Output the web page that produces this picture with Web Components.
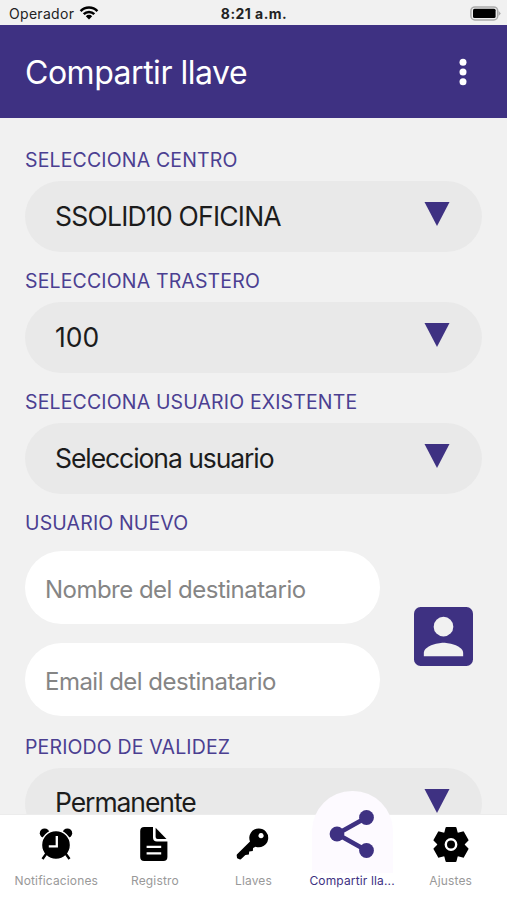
<!DOCTYPE html>
<html lang="es">
<head>
<meta charset="utf-8">
<meta name="viewport" content="width=device-width, initial-scale=1">
<title>Compartir llave</title>
<style>
  html, body {
    margin: 0;
    height: 100%;
  }
  body {
    overflow: hidden;
    background-color: #f1f1f1;
    font-family: Inter, "Liberation Sans", sans-serif;
  }
</style>
</head>
<body>
<share-key-page></share-key-page>

<script>
class StatusBar extends HTMLElement {
  constructor() {
    super();
    this.attachShadow({ mode: "open" });
  }

  connectedCallback() {
    this.shadowRoot.innerHTML = `
      <style>
        :host {
          display: grid;
          grid-template-columns: 1fr auto 1fr;
          align-items: center;
          height: 25px;
          padding: 2px 6px 0 9px;
          box-sizing: border-box;
          font-size: 14px;
          line-height: 20px;
          color: #222;
        }
        .carrier {
          display: flex;
          align-items: center;
          gap: 5px;
        }
        .carrier span { letter-spacing: 0.3px; }
        .time {
          font-weight: 700;
          letter-spacing: 0.45px;
          margin-left: -2px;
        }
        .battery { justify-self: end; }
        svg { display: block; }
        .carrier svg { margin-top: -2px; }
      </style>
      <div class="carrier">
        <span>Operador</span>
        <svg width="20" height="15" viewBox="0 0 20 15">
          <g fill="none" stroke="#000" stroke-width="2.5">
            <path d="M1.6 6.1a11.7 11.7 0 0 1 16.8 0"/>
            <path d="M4.7 9.2a7.4 7.4 0 0 1 10.6 0"/>
          </g>
          <path d="M10 14.4l-3.2-3.2a4.5 4.5 0 0 1 6.4 0z"/>
        </svg>
      </div>
      <div class="time">8:21 a.m.</div>
      <svg class="battery" width="31" height="16" viewBox="0 0 31 16">
        <rect x=".9" y=".9" width="26.8" height="13" rx="4" fill="#eee" stroke="#aaa" stroke-width="1.5"/>
        <rect x="3" y="2.8" width="22.6" height="9.2" rx="1.5"/>
        <path d="M28.6 4.7l2.2 2.7-2.2 2.7z" fill="#aaa"/>
      </svg>
    `;
  }
}

class AppHeader extends HTMLElement {
  constructor() {
    super();
    this.attachShadow({ mode: "open" });
  }

  connectedCallback() {
    this.shadowRoot.innerHTML = `
      <style>
        :host {
          display: flex;
          align-items: center;
          justify-content: space-between;
          height: 93px;
          padding: 0 40px 0 25px;
          box-sizing: border-box;
          background-color: #3e3182;
          color: #fff;
        }
        h1 {
          margin: 0;
          padding-top: 2px;
          font-size: 32px;
          font-weight: 400;
          line-height: 40px;
          letter-spacing: -0.48px;
        }
        svg { display: block; }
      </style>
      <h1><slot></slot></h1>
      <svg width="8" height="28" viewBox="0 0 8 28" fill="#fff">
        <circle cx="4" cy="4.2" r="3.5"/>
        <circle cx="4" cy="14" r="3.5"/>
        <circle cx="4" cy="23.8" r="3.5"/>
      </svg>
    `;
  }
}

class FieldLabel extends HTMLElement {
  constructor() {
    super();
    this.attachShadow({ mode: "open" });
  }

  connectedCallback() {
    this.shadowRoot.innerHTML = `
      <style>
        :host {
          display: block;
          font-size: 19.5px;
          line-height: 24px;
          letter-spacing: 0.15px;
          color: #4b3f91;
          white-space: nowrap;
        }
      </style>
      <slot></slot>
    `;
  }
}

class SelectField extends HTMLElement {
  constructor() {
    super();
    this.attachShadow({ mode: "open" });
  }

  connectedCallback() {
    this.shadowRoot.innerHTML = `
      <style>
        :host {
          display: flex;
          flex-direction: column;
          gap: 9px;
        }
        .box {
          display: flex;
          align-items: center;
          justify-content: space-between;
          height: 71px;
          padding: 0 32px 0 30px;
          box-sizing: border-box;
          border-radius: 36px;
          background-color: #e9e9e9;
          font-size: 26.5px;
          letter-spacing: var(--value-spacing, -1.07px);
          color: #1c1c1c;
          white-space: nowrap;
        }
        span { margin-bottom: 2px; }
        svg {
          display: block;
          margin-bottom: 5px;
        }
      </style>
      <field-label>${this.getAttribute("label")}</field-label>
      <div class="box">
        <span><slot></slot></span>
        <svg width="26" height="24" viewBox="0 0 26 24"><path d="M.5 0h25L13 24z" fill="#3e3182"/></svg>
      </div>
    `;
  }
}

class TextField extends HTMLElement {
  constructor() {
    super();
    this.attachShadow({ mode: "open" });
  }

  connectedCallback() {
    this.shadowRoot.innerHTML = `
      <style>
        :host {
          display: flex;
          align-items: center;
          height: 73px;
          padding: 3px 20px 0;
          box-sizing: border-box;
          border-radius: 37px;
          background-color: #fff;
          font-size: 24px;
          letter-spacing: -0.52px;
          color: #858585;
          white-space: nowrap;
        }
      </style>
      <slot></slot>
    `;
  }
}

class ContactButton extends HTMLElement {
  constructor() {
    super();
    this.attachShadow({ mode: "open" });
  }

  connectedCallback() {
    this.shadowRoot.innerHTML = `
      <style>
        :host { display: block; }
        svg { display: block; }
      </style>
      <svg width="59" height="59" viewBox="3 3 18 18">
        <rect x="3" y="3" width="18" height="18" rx="2" fill="#3e3182"/>
        <circle cx="12" cy="9" r="3" fill="#f1f1f1"/>
        <path d="M18 18H6v-1c0-2 4-3.1 6-3.1s6 1.1 6 3.1z" fill="#f1f1f1"/>
      </svg>
    `;
  }
}

const TAB_ICONS = {
  alarm: `
    <svg width="34" height="34" viewBox="0 0 34 34">
      <circle cx="5.6" cy="6.2" r="4.8"/>
      <circle cx="28.4" cy="6.2" r="4.8"/>
      <circle cx="17" cy="18" r="14.5" stroke="#fff" stroke-width="1.4"/>
      <path d="M8.5 25l-5 7M25.5 25l5 7" stroke="#000" stroke-width="2.4"/>
      <path d="M17.8 9v10.3H9.8" fill="none" stroke="#fff" stroke-width="2.3"/>
    </svg>`,
  document: `
    <svg width="36" height="36" viewBox="0 0 36 36">
      <path d="M7.2 1H16v10.6a4 4 0 0 0 4 4h10.4V31a4 4 0 0 1-4 4H7.2a4 4 0 0 1-4-4V5a4 4 0 0 1 4-4z"/>
      <path d="M18.6 1.8L29.5 13H20.6a2 2 0 0 1-2-2z"/>
      <path d="M9.6 20.8h14.6M9.6 27.3h14.6" stroke="#fff" stroke-width="2.3"/>
    </svg>`,
  key: `
    <svg width="34" height="34" viewBox="0 0 34 34">
      <path fill-rule="evenodd" d="M22.7 1.5a9.4 9.4 0 1 1-3.2 18.2l-2.4 1.2-.3 3.2-3.6.3-.3 3.1-3.5.4-4.2 4.2q-.5.5-1.2.3l-2.3-.8q-.6-.2-.7-.9l-.3-2.3q-.1-.6.4-1.1L14 14.5A9.4 9.4 0 0 1 22.7 1.5zm2.3 4.6a2.6 2.6 0 1 0 .1 0z"/>
    </svg>`,
  share: `
    <svg width="46" height="50" viewBox="0 0 46 50" fill="#3e3182">
      <path d="M37.5 8.5L8 25l29.5 16.5" fill="none" stroke="#3e3182" stroke-width="4.6"/>
      <circle cx="37.5" cy="8.5" r="7.4"/>
      <circle cx="8" cy="25" r="7.4"/>
      <circle cx="37.5" cy="41.5" r="7.4"/>
    </svg>`,
  gear: `
    <svg width="36" height="37" viewBox="0 0 36 37">
      <g stroke="#000" stroke-width="2" stroke-linejoin="round">
        <path d="M13.5 2h9l1.5 6H12zM13.5 35h9l1.5-6H12z"/>
        <path d="M13.5 2h9l1.5 6H12zM13.5 35h9l1.5-6H12z" transform="rotate(60 18 18.5)"/>
        <path d="M13.5 2h9l1.5 6H12zM13.5 35h9l1.5-6H12z" transform="rotate(120 18 18.5)"/>
      </g>
      <circle cx="18" cy="18.5" r="13.4"/>
      <circle cx="18" cy="18.5" r="5.2" fill="none" stroke="#fff" stroke-width="2.4"/>
    </svg>`
};

class TabItem extends HTMLElement {
  constructor() {
    super();
    this.attachShadow({ mode: "open" });
  }

  connectedCallback() {
    this.shadowRoot.innerHTML = `
      <style>
        :host {
          display: flex;
          flex-direction: column;
          align-items: center;
          min-width: 0;
          font-size: 12px;
          line-height: 16px;
          letter-spacing: 0.15px;
          color: #999;
          white-space: nowrap;
        }
        :host([active]) { color: #3e3182; }
        .icon {
          display: flex;
          align-items: center;
          justify-content: center;
          height: 58px;
        }
        /* the active tab rises above the bar in a rounded bubble */
        :host([active]) .icon {
          width: 81px;
          height: 82px;
          margin-top: -24px;
          padding-top: 4px;
          box-sizing: border-box;
          border-radius: 40px 40px 0 0;
          background-color: #fdfaff;
        }
        svg { display: block; }
      </style>
      <div class="icon">${TAB_ICONS[this.getAttribute("icon")]}</div>
      <span><slot></slot></span>
    `;
  }
}

class TabBar extends HTMLElement {
  constructor() {
    super();
    this.attachShadow({ mode: "open" });
  }

  connectedCallback() {
    this.shadowRoot.innerHTML = `
      <style>
        :host {
          display: grid;
          grid-template-columns: repeat(5, 1fr);
          height: 86px;
          padding: 0 7px 0 7px;
          box-sizing: border-box;
          background-color: #fff;
          border-top: 1px solid #ececec;
        }
      </style>
      <slot></slot>
    `;
  }
}

class ShareKeyPage extends HTMLElement {
  constructor() {
    super();
    this.attachShadow({ mode: "open" });
  }

  connectedCallback() {
    this.shadowRoot.innerHTML = `
      <style>
        :host {
          display: flex;
          flex-direction: column;
          height: 100vh;
        }
        status-bar, app-header, tab-bar { flex: none; }
        tab-bar { z-index: 1; }
        main {
          flex: 1;
          min-height: 0;
          overflow: hidden;
          display: flex;
          flex-direction: column;
          gap: 17px;
          padding: 30px 25px 0;
        }
        main > * { flex: none; }
        .center { --value-spacing: -0.77px; }
        .unit { --value-spacing: 0px; }
        .new-user {
          display: grid;
          grid-template-columns: 355px auto;
          justify-content: space-between;
          align-items: center;
          padding-right: 9px;
          margin: -1px 0 1.5px;
        }
        .inputs {
          display: flex;
          flex-direction: column;
          gap: 19px;
        }
        contact-button { margin-top: 5px; }
      </style>
      <status-bar></status-bar>
      <app-header>Compartir llave</app-header>
      <main>
        <select-field class="center" label="SELECCIONA CENTRO">SSOLID10 OFICINA</select-field>
        <select-field class="unit" label="SELECCIONA TRASTERO">100</select-field>
        <select-field label="SELECCIONA USUARIO EXISTENTE">Selecciona usuario</select-field>
        <field-label>USUARIO NUEVO</field-label>
        <div class="new-user">
          <div class="inputs">
            <text-field>Nombre del destinatario</text-field>
            <text-field>Email del destinatario</text-field>
          </div>
          <contact-button></contact-button>
        </div>
        <select-field label="PERIODO DE VALIDEZ">Permanente</select-field>
      </main>
      <tab-bar>
        <tab-item icon="alarm">Notificaciones</tab-item>
        <tab-item icon="document">Registro</tab-item>
        <tab-item icon="key">Llaves</tab-item>
        <tab-item icon="share" active>Compartir lla...</tab-item>
        <tab-item icon="gear">Ajustes</tab-item>
      </tab-bar>
    `;
  }
}

customElements.define("status-bar", StatusBar);
customElements.define("app-header", AppHeader);
customElements.define("field-label", FieldLabel);
customElements.define("select-field", SelectField);
customElements.define("text-field", TextField);
customElements.define("contact-button", ContactButton);
customElements.define("tab-item", TabItem);
customElements.define("tab-bar", TabBar);
customElements.define("share-key-page", ShareKeyPage);
</script>
</body>
</html>
